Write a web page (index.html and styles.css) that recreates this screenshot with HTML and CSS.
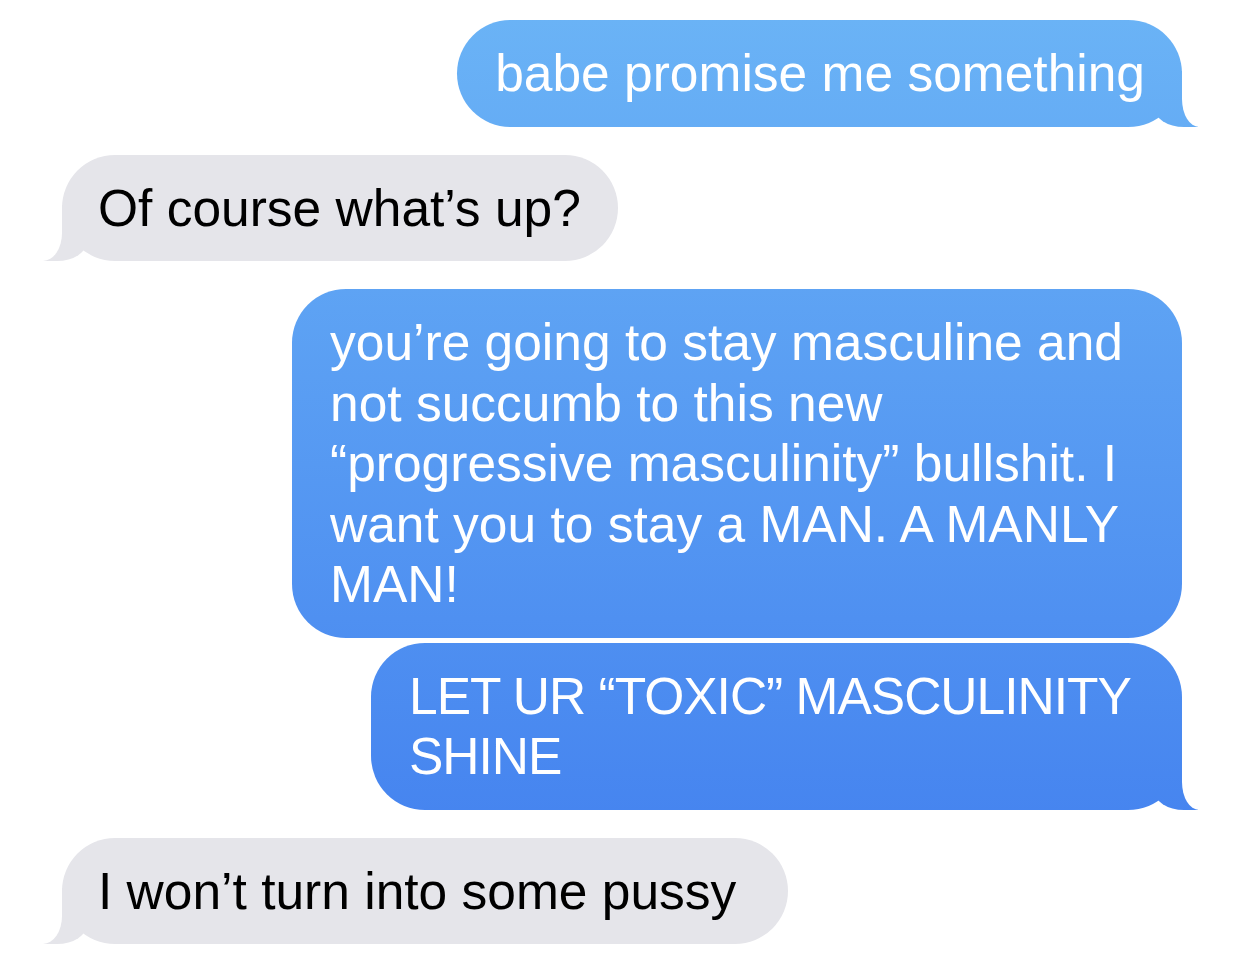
FILE: index.html
```
<!DOCTYPE html>
<html lang="en">
<head>
    <meta charset="UTF-8">
    <meta name="viewport" content="width=device-width, initial-scale=1.0">
    <title>Messages</title>
<link rel="stylesheet" href="styles.css">
</head>
<body>

<div class="thread">
  <div class="msg sent">babe promise me something</div>
  <div class="msg received">Of course what’s up?</div>
  <div class="msg sent no-tail long">you’re going to stay masculine and<br>not succumb to this new<br>“progressive masculinity” bullshit. I<br>want you to stay a MAN. A MANLY<br>MAN!</div>
  <div class="msg sent same-group caps">LET UR “TOXIC” MASCULINITY<br>SHINE</div>
  <div class="msg received roomy">I won’t turn into some pussy</div>
</div>

</body>
</html>
```

FILE: styles.css
```
body {
  margin: 0;
  background-color: #fff;
  font-family: 'Liberation Sans', Arial, sans-serif;
}

.thread {
  display: flex;
  flex-direction: column;
  padding: 20px 60px 0 62px;
}

.msg {
  position: relative;
  z-index: 0;
  box-sizing: border-box;
  padding: 23px 37px 23px 38px;
  border-radius: 54px;
  font-size: 51.5px;
  line-height: 60.5px;
  white-space: nowrap;
  margin-top: 28px;
}

.msg:first-child {
  margin-top: 0;
}

.msg.same-group {
  margin-top: 5px;
}

/* blue gradient follows the screen, like the real app */
.sent {
  align-self: flex-end;
  color: #fff;
  background: linear-gradient(to bottom, #6bb4f6 0, #4482ef 860px) fixed;
}

.received {
  align-self: flex-start;
  color: #000;
  background-color: #e5e5ea;
  padding-left: 36px;
}

.roomy {
  padding-right: 52px;
}

.long {
  width: 890px;
}

.caps {
  width: 811px;
  letter-spacing: -1px;
}

/* tails */
.msg::before,
.msg::after {
  content: "";
  position: absolute;
  bottom: 0;
  z-index: -1;
  height: 56px;
}

.sent::before {
  right: -16px;
  width: 44px;
  background: linear-gradient(to bottom, #6bb4f6 0, #4482ef 860px) fixed;
  border-bottom-left-radius: 30px 20px;
}

.sent::after {
  left: 100%;
  width: 30px;
  background: #fff;
  border-bottom-left-radius: 17px 28px;
}

.received::before {
  left: -19px;
  width: 44px;
  background: #e5e5ea;
  border-bottom-right-radius: 30px 20px;
}

.received::after {
  right: 100%;
  width: 30px;
  background: #fff;
  border-bottom-right-radius: 19px 28px;
}

.no-tail::before,
.no-tail::after {
  display: none;
}
```
